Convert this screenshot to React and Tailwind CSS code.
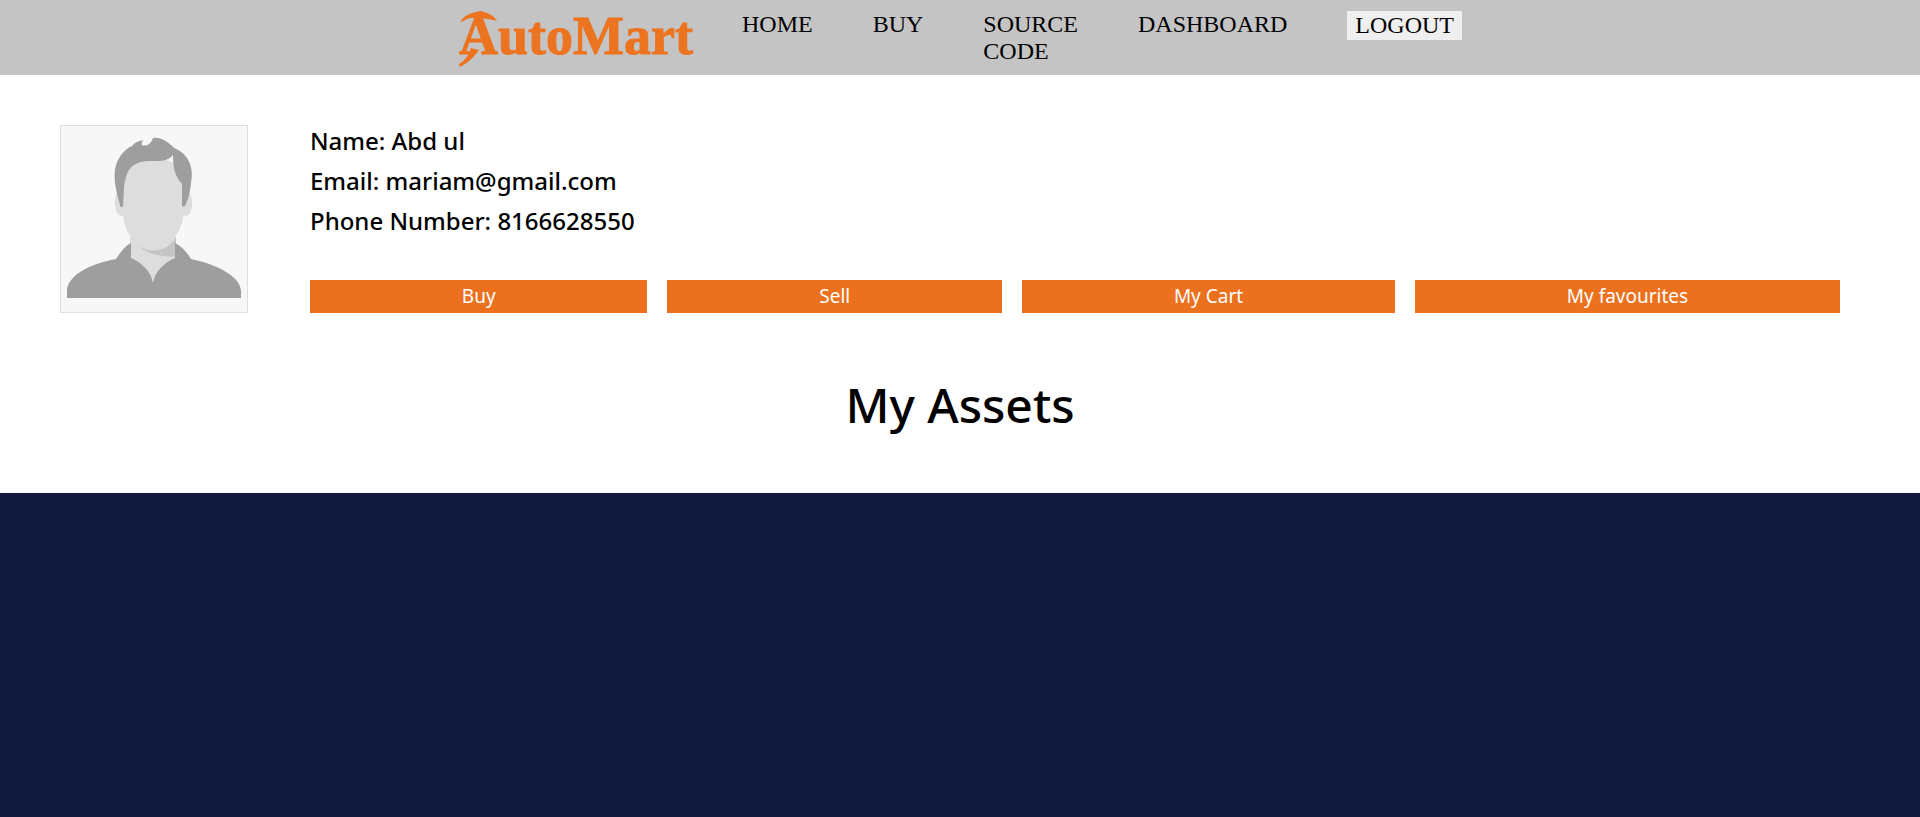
import React from "react";

const links = ["HOME", "BUY", "SOURCE CODE", "DASHBOARD"];
const details = ["Name: Abd ul", "Email: mariam@gmail.com", "Phone Number: 8166628550"];
const actions = ["Buy", "Sell", "My Cart", "My favourites"];

function Logo() {
  return (
    <svg width="236" height="74" viewBox="0 0 236 74" fill="#ec731f" aria-hidden="true">
      {/* flourishes that frame the wordmark */}
      <path d="M2 23C6 14 14 13 22 11C28 12 36 15 39 21C29 18 19 18 12 18C8 19 5 21 2 23Z" />
      <path d="M13 48C11 54 8 60 1 64L2 67C10 63 17 56 21 50Z" />
      <text x="1" y="54" fontSize="54" fontWeight="700" stroke="#ec731f" strokeWidth="1">
        AutoMart
      </text>
    </svg>
  );
}

function Avatar() {
  return (
    <svg viewBox="1 1 186 186" className="size-[188px] shrink-0 border border-[#dedede] bg-[#f7f7f7]" role="img" aria-label="Profile">
      <g fill="#dddddd">
        <path d="M59 67C53 68 53 91 62 91L126 91C134 90 134 68 127 67Z" />
        <path d="M70 105h46v32L94 162L70 137Z" />
      </g>
      <path d="M70 112C82 130 106 130 116 112V131C96 134 78 124 70 112Z" fill="#c6c5c5" />
      <path d="M62 45C62 30 125 20 124 62V88C121 112 107 123 93 123C79 123 65 111 63 91Z" fill="#dddddd" />
      <path d="M61 82C60 81 60 81 60 80C55 63 53 50 56 40C59 31 65 24 72 21C75 17 79 16 84 15C81 17 82 19 82 20C88 22 91 18 93 13C101 12 108 17 114 23C130 29 134 45 131 58C130 68 128 75 125 81C124 82 122 82 122 80V59C115 51 113 43 113 30C108 36 102 36 93 36C80 36 70 38 66 52C63 61 64 72 63 81C63 82 62 82 61 82Z" fill="#9e9e9e" />
      <path d="M71 118V133C82 138 91 146 93 158C95 146 104 138 115 133V118C121 121 127 127 131 134C160 140 181 153 181 166V173H7V166C7 151 29 139 56 134C60 128 65 121 71 118Z" fill="#9e9e9e" />
    </svg>
  );
}

export default function App() {
  return (
    <div className="flex min-h-screen flex-col bg-[#11193e] text-black">
      <header className="flex min-h-[75px] items-start justify-center bg-[#c4c4c4] font-['Liberation_Serif',serif]">
        <a href="#home" aria-label="AutoMart" className="mr-12">
          <Logo />
        </a>
        <nav className="flex items-start gap-[60px] pt-[11px] text-2xl leading-[27px]">
          {links.map((label) => (
            <a key={label} href={"#" + label.toLowerCase().replace(" ", "-")} className="w-min">
              {label}
            </a>
          ))}
          <button type="button" className="bg-[#efefef] px-2 py-px">
            LOGOUT
          </button>
        </nav>
      </header>

      <main className="bg-white pb-12 font-['Noto_Sans',sans-serif]">
        <section className="flex gap-[62px] pt-[50px] pr-20 pl-[60px]">
          <Avatar />
          <div className="flex grow flex-col justify-between">
            <div className="text-2xl leading-8 font-medium">
              {details.map((line) => (
                <p key={line} className="mb-2">
                  {line}
                </p>
              ))}
            </div>
            <div className="flex gap-5 text-[19px] leading-[33px] text-white">
              {actions.map((label) => (
                <button key={label} type="button" className="grow bg-[#ec711e]">
                  {label}
                </button>
              ))}
            </div>
          </div>
        </section>
        <h1 className="mt-[52px] text-center text-5xl leading-[80px] font-medium">My Assets</h1>
      </main>
    </div>
  );
}
